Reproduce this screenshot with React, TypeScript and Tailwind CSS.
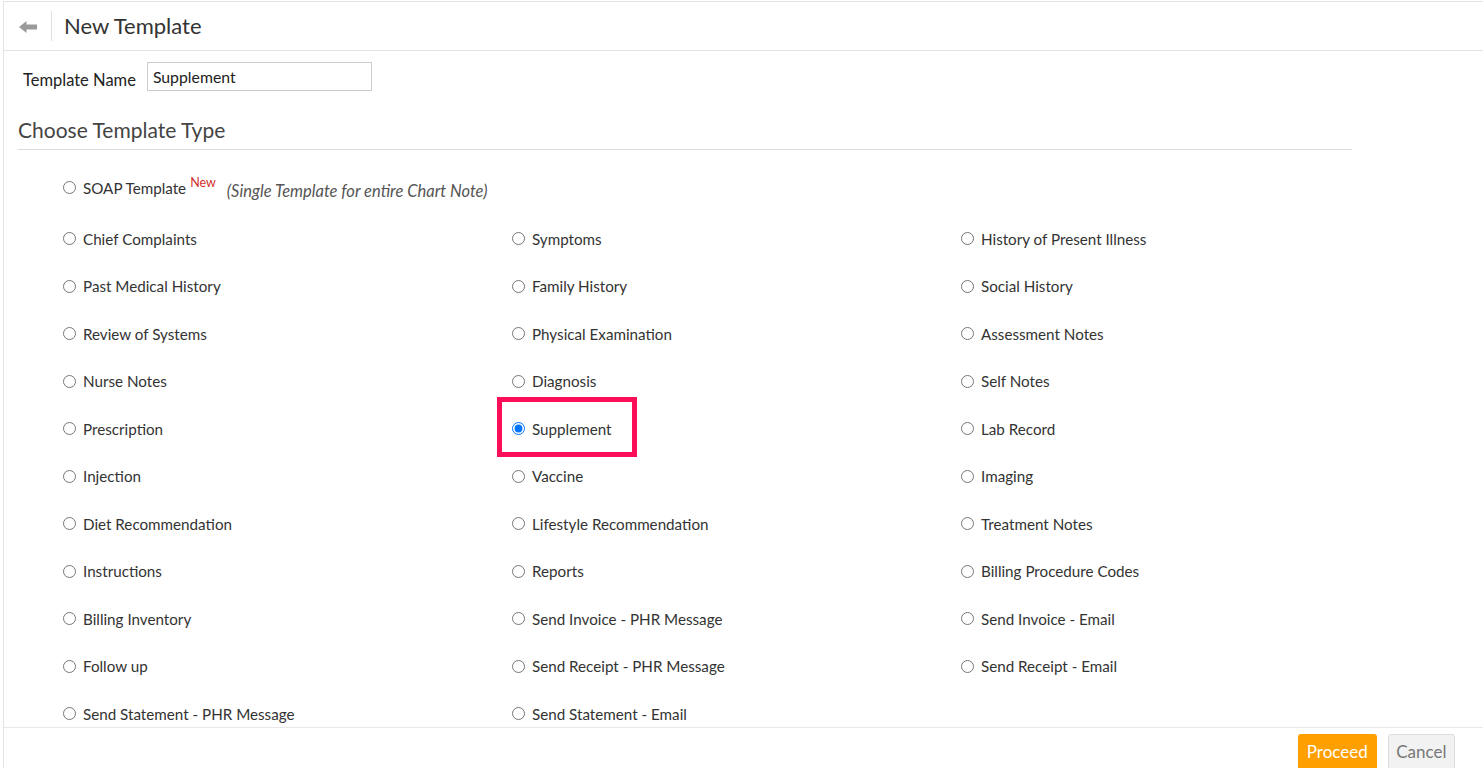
import React from 'react';

const rows: string[][] = [
    ['Chief Complaints', 'Symptoms', 'History of Present Illness'],
    ['Past Medical History', 'Family History', 'Social History'],
    ['Review of Systems', 'Physical Examination', 'Assessment Notes'],
    ['Nurse Notes', 'Diagnosis', 'Self Notes'],
    ['Prescription', 'Supplement', 'Lab Record'],
    ['Injection', 'Vaccine', 'Imaging'],
    ['Diet Recommendation', 'Lifestyle Recommendation', 'Treatment Notes'],
    ['Instructions', 'Reports', 'Billing Procedure Codes'],
    ['Billing Inventory', 'Send Invoice - PHR Message', 'Send Invoice - Email'],
    ['Follow up', 'Send Receipt - PHR Message', 'Send Receipt - Email'],
    ['Send Statement - PHR Message', 'Send Statement - Email', ''],
];

function Option({ label, checked }: { label: string; checked?: boolean }) {
    return (
        <label className="relative flex items-center h-[47.5px] pl-[5px] text-[15.2px] text-[#333]">
            <input
                type="radio"
                name="templateType"
                defaultChecked={checked}
                className="m-0 w-[13px] h-[13px] shrink-0"
            />
            <span className="ml-[7px] mt-[1px]">{label}</span>
            {/* highlight box around the selected type */}
            {checked && (
                <span className="absolute left-[-10px] top-[-8px] w-[140px] h-[60px] border-[5px] border-[#fb0d57] pointer-events-none" />
            )}
        </label>
    );
}

export default function App() {
    return (
        <div className="h-screen overflow-hidden bg-white pt-px pl-[3px] font-['Lato','Liberation_Sans',sans-serif]">
            <div className="h-full flex flex-col border-l border-t border-[#e3e3e3]">
                {/* Header */}
                <div className="h-[49px] shrink-0 flex items-center border-b border-[#e3e3e3] pl-[15px]">
                    <svg width="18" height="12" viewBox="0 0 18 12" className="text-[#9a9a9a] mt-[2px]">
                        <path d="M0 6 L7.5 0 L7.5 3.5 L18 3.5 L18 8.5 L7.5 8.5 L7.5 12 Z" fill="currentColor" />
                    </svg>
                    <div className="ml-[14px] w-px h-[30px] bg-[#e0e0e0]" />
                    <h1 className="ml-[12px] text-[22px] text-[#333] leading-none pb-[1px]">New Template</h1>
                </div>

                {/* Body */}
                <div className="flex-1 overflow-hidden px-[14px]">
                    <div className="flex items-start mt-[11px]">
                        <span className="ml-[5px] mt-[10px] text-[16.5px] text-[#222] leading-none">Template Name</span>
                        <input
                            type="text"
                            defaultValue="Supplement"
                            className="ml-[11px] w-[225px] h-[29px] border border-[#cccccc] px-[5px] text-[15.8px] text-[#222] outline-none"
                        />
                    </div>

                    <h2 className="mt-[28px] text-[21px] text-[#444] leading-none">Choose Template Type</h2>
                    <div className="mt-[9px] w-[1334px] h-px bg-[#dcdcdc]" />

                    <div className="ml-[40px] mt-[14px]">
                        <div className="flex items-center h-[47.5px] mb-[3.5px] pl-[5px] text-[15.2px] text-[#333]">
                            <input type="radio" name="templateType" className="m-0 w-[13px] h-[13px] shrink-0" />
                            <span className="ml-[7px] mt-[1px]">SOAP Template</span>
                            <sup className="ml-[4px] text-[12.5px] text-[#d0312d] -top-[5px]">New</sup>
                            <span className="ml-[11px] mt-[7px] italic text-[16.5px] text-[#555]">(Single Template for entire Chart Note)</span>
                        </div>
                        <div className="grid grid-cols-[449px_449px_449px]">
                            {rows.map((row, i) =>
                                row.map((label, j) =>
                                    label ? (
                                        <Option key={`${i}-${j}`} label={label} checked={label === 'Supplement'} />
                                    ) : (
                                        <div key={`${i}-${j}`} />
                                    )
                                )
                            )}
                        </div>
                    </div>
                </div>

                {/* Footer */}
                <div className="h-[41px] shrink-0 border-t border-[#e8e8e8] bg-white flex justify-end items-start pt-[6px] pr-[28px] gap-[11px]">
                    <button className="h-[36px] px-[9px] rounded-[3px] bg-[#ffa000] text-white text-[17px]">Proceed</button>
                    <button className="h-[36px] px-[7.5px] rounded-[3px] bg-[#f2f2f2] border border-[#dddddd] text-[#777] text-[17px]">Cancel</button>
                </div>
            </div>
        </div>
    );
}
